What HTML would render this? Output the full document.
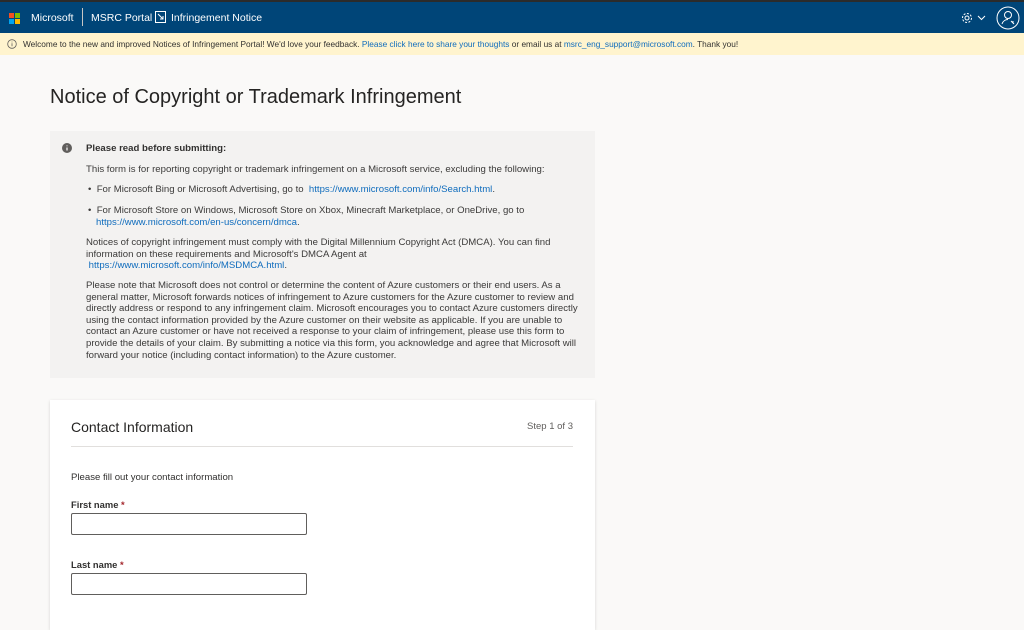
<!DOCTYPE html>
<html><head><meta charset="utf-8"><style>
*{margin:0;padding:0;box-sizing:border-box}
body{width:1024px;height:615px;overflow:hidden;background:#faf9f8;font-family:"Liberation Sans",sans-serif;color:#323130}
.hdr{height:33px;background:#004578;border-top:2px solid #2b2b2b;display:flex;align-items:center;color:#fff;font-size:10.5px;position:relative}
.ban{height:22px;background:#fff4ce;display:flex;align-items:center;font-size:8.3px;color:#323130;padding-left:7px}
a{color:#0f6cbd;text-decoration:none}
h1{position:absolute;left:50px;top:86px;font-size:20px;font-weight:400;color:#252423}
.note{position:absolute;left:50px;top:131px;width:545px;height:247px;background:#f3f2f1;font-size:9.6px;line-height:11.6px;color:#3b3a39}
.note p{position:absolute;left:36px;width:495px}
.card{position:absolute;left:50px;top:400px;width:545px;height:230px;background:#fff;box-shadow:0 1px 3px rgba(0,0,0,.15)}
.in{position:absolute;left:21px;width:236px;height:22px;border:1px solid #605e5c;border-radius:2px}
.lbl{position:absolute;left:21px;font-size:9.4px;font-weight:bold;color:#323130}
.lbl span{color:#a4262c}
</style></head><body>
<div class="hdr">
<svg style="position:absolute;left:9px;top:11px" width="11" height="11"><rect width="5" height="5" fill="#f25022"/><rect x="6" width="5" height="5" fill="#7fba00"/><rect y="6" width="5" height="5" fill="#00a4ef"/><rect x="6" y="6" width="5" height="5" fill="#ffb900"/></svg>
<span style="position:absolute;left:31px;top:10px">Microsoft</span>
<div style="position:absolute;left:82px;top:6px;width:1px;height:18px;background:#c8c6c4"></div>
<span style="position:absolute;left:91px;top:10px">MSRC Portal</span>
<svg style="position:absolute;left:155px;top:9px" width="11" height="12" fill="none" stroke="#fff" stroke-width="1"><rect x="0.5" y="0.5" width="10" height="11"/><path d="M3 3l5 5M8 5v3H5"/></svg>
<span style="position:absolute;left:171px;top:10px">Infringement Notice</span>
<svg style="position:absolute;left:961px;top:10px" width="12" height="12" fill="none" stroke="#fff" stroke-width="1"><circle cx="6" cy="6" r="2"/><circle cx="6" cy="6" r="4.5" stroke-dasharray="2 1.5"/></svg>
<svg style="position:absolute;left:977px;top:13px" width="9" height="6" fill="none" stroke="#fff"><path d="M1 1l3.5 3.5L8 1"/></svg>
<svg style="position:absolute;left:996px;top:4px" width="24" height="24" fill="none" stroke="#fff" stroke-width="1"><circle cx="12" cy="12" r="11"/><circle cx="12" cy="9" r="3.5"/><path d="M6 18c1-3 3.5-4.5 6-4.5M15 15l3 3M17 15v2"/></svg>
</div>
<div class="ban"><svg width="10" height="10" style="margin-right:6px" fill="none" stroke="#605e5c" stroke-width=".8"><circle cx="5" cy="5" r="4.3"/><path d="M5 4.3v3M5 2.6v.8"/></svg>Welcome to the new and improved Notices of Infringement Portal! We'd love your feedback.&nbsp; <a>Please click here to share your thoughts</a>&nbsp;or email us at&nbsp; <a>msrc_eng_support@microsoft.com</a>. Thank you!</div>
<h1>Notice of Copyright or Trademark Infringement</h1>
<div class="note">
<svg style="position:absolute;left:12px;top:12px" width="10" height="10"><circle cx="5" cy="5" r="5" fill="#605e5c"/><path d="M5 4.5v3M5 2.5v.8" stroke="#fff" stroke-width="1.2"/></svg>
<p style="top:12px;font-weight:bold;color:#323130">Please read before submitting:</p>
<p style="top:33px">This form is for reporting copyright or trademark infringement on a Microsoft service, excluding the following:</p>
<p style="top:53px;left:38px;width:500px">•&nbsp; For Microsoft Bing or Microsoft Advertising, go to&nbsp; <a>https://www.microsoft.com/info/Search.html</a>.</p>
<p style="top:74px;left:38px;width:500px">•&nbsp; For Microsoft Store on Windows, Microsoft Store on Xbox, Minecraft Marketplace, or OneDrive, go to<br>&nbsp;&nbsp;&nbsp;<a>https://www.microsoft.com/en-us/concern/dmca</a>.</p>
<p style="top:106px">Notices of copyright infringement must comply with the Digital Millennium Copyright Act (DMCA). You can find information on these requirements and Microsoft's DMCA Agent at<br>&nbsp;<a>https://www.microsoft.com/info/MSDMCA.html</a>.</p>
<p style="top:149px">Please note that Microsoft does not control or determine the content of Azure customers or their end users. As a general matter, Microsoft forwards notices of infringement to Azure customers for the Azure customer to review and directly address or respond to any infringement claim. Microsoft encourages you to contact Azure customers directly using the contact information provided by the Azure customer on their website as applicable. If you are unable to contact an Azure customer or have not received a response to your claim of infringement, please use this form to provide the details of your claim. By submitting a notice via this form, you acknowledge and agree that Microsoft will forward your notice (including contact information) to the Azure customer.</p>
</div>
<div class="card">
<div style="position:absolute;left:21px;top:19px;font-size:14px;color:#252423">Contact Information</div>
<div style="position:absolute;right:22px;top:21px;font-size:9.5px;color:#605e5c">Step 1 of 3</div>
<div style="position:absolute;left:21px;right:22px;top:46px;height:1px;background:#e1dfdd"></div>
<div style="position:absolute;left:21px;top:72px;font-size:9.6px">Please fill out your contact information</div>
<div class="lbl" style="top:99px">First name <span>*</span></div>
<div class="in" style="top:113px"></div>
<div class="lbl" style="top:159px">Last name <span>*</span></div>
<div class="in" style="top:173px"></div>
</div>
</body></html>
